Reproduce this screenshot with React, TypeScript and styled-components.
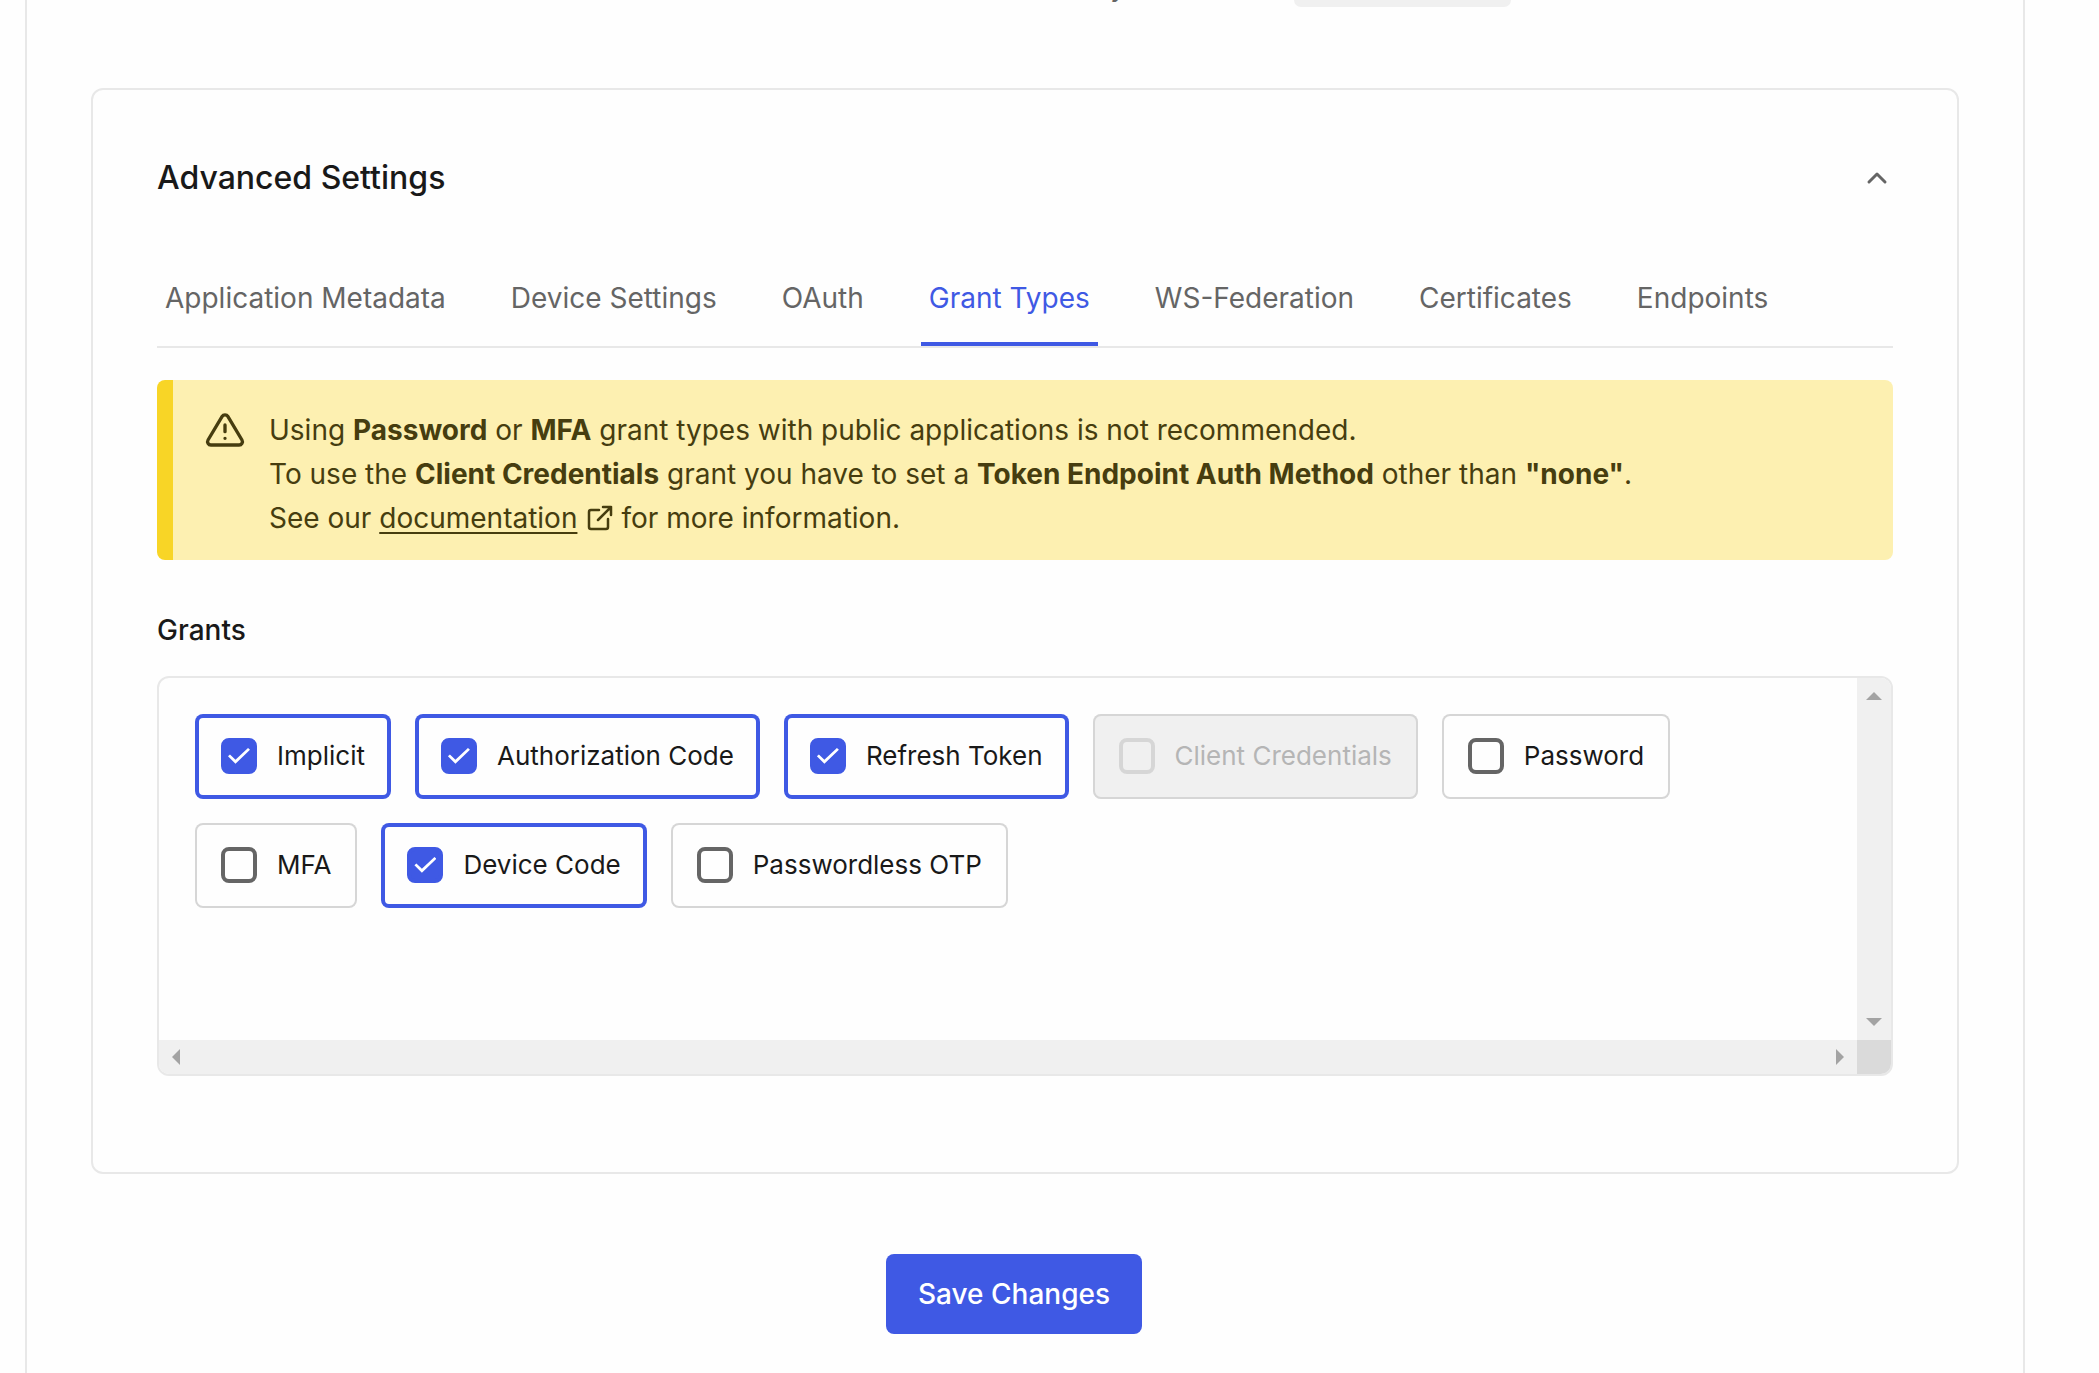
import React, { useState } from "react";
import styled, { createGlobalStyle, css } from "styled-components";

const color = {
  ink: "#191919",
  muted: "#656565",
  line: "#e8e8e8",
  chipLine: "#d6d6d6",
  primary: "#3f59e4",
  surface: "#f0f0f0",
  disabledText: "#b5b5b5",
  alertBg: "#fdf0b1",
  alertBar: "#f8d526",
  alertText: "#463d0f",
};

const GlobalStyle = createGlobalStyle`
  *, *::before, *::after { box-sizing: border-box; }
  body {
    margin: 0;
    background: #fefefe;
    color: ${color.ink};
    font-family: Inter, "Liberation Sans", sans-serif;
    font-size: 28px;
    line-height: 44px;
  }
  h2, h3, p, fieldset { margin: 0; padding: 0; border: 0; }
  h2, h3 { font-weight: 500; }
  button, input { font: inherit; }
`;

const Page = styled.div`
  min-height: 100vh;
  display: flex;
  padding: 0 74px 0 25px;
`;

const Panel = styled.main`
  flex: 1;
  min-width: 0;
  display: flex;
  flex-direction: column;
  padding: 0 64px 39px;
  border: solid ${color.line};
  border-width: 0 2px;
`;

const HintRow = styled.div`
  height: 88px;
  display: flex;
  justify-content: flex-end;
  align-items: flex-start;
  gap: 168px;
  overflow: hidden;
  padding-right: 448px;
`;

const HintText = styled.span`
  margin-top: -36px;
  color: ${color.muted};
`;

const HintCode = styled.code`
  width: 217px;
  height: 7px;
  border-radius: 0 0 8px 8px;
  background: ${color.surface};
`;

const Card = styled.section`
  border: 2px solid ${color.line};
  border-radius: 12px;
  padding: 64px 64px 96px;
`;

const CardHeader = styled.header`
  display: flex;
  align-items: center;
  justify-content: space-between;
  height: 48px;
`;

const Title = styled.h2`
  font-size: 32px;
  line-height: 48px;
`;

const IconButton = styled.button`
  display: flex;
  padding: 0;
  border: 0;
  background: none;
  color: ${color.muted};
`;

const Tabs = styled.div`
  display: flex;
  gap: 49px;
  margin-top: 72px;
  border-bottom: 2px solid ${color.line};
`;

const Tab = styled.button<{ $active: boolean }>`
  height: 72px;
  padding: 0 8px 20px;
  border: 0;
  border-bottom: 4px solid ${(p) => (p.$active ? color.primary : "transparent")};
  background: none;
  color: ${(p) => (p.$active ? color.primary : color.muted)};
  white-space: nowrap;
`;

const Alert = styled.div`
  display: flex;
  gap: 24px;
  margin-top: 32px;
  padding: 28px 32px 20px;
  border-left: 16px solid ${color.alertBar};
  border-radius: 8px;
  background: ${color.alertBg};
  color: ${color.alertText};

  strong { font-weight: 700; }
`;

const DocLink = styled.a`
  color: inherit;
  text-underline-offset: 4px;
  text-decoration-thickness: 2px;
`;

const WarningIcon = styled.svg`
  flex: none;
  width: 40px;
  height: 40px;
  margin-top: 2px;
`;

const LinkIcon = styled.svg`
  width: 24px;
  height: 24px;
  margin: 0 9px 0 11px;
  vertical-align: -2px;
  overflow: visible;
`;

const SectionLabel = styled.h3`
  margin: 48px 0 24px;
  font-size: 28px;
  line-height: 44px;
`;

const GrantBox = styled.div`
  display: grid;
  grid-template: 1fr 34px / 1fr 34px;
  height: 400px;
  border: 2px solid ${color.line};
  border-radius: 12px;
  overflow: hidden;
`;

const GrantList = styled.fieldset`
  display: flex;
  flex-wrap: wrap;
  align-content: flex-start;
  gap: 24px;
  min-width: 0;
  padding: 36px;
`;

const ScrollTrack = styled.div<{ $vertical?: boolean }>`
  display: flex;
  flex-direction: ${(p) => (p.$vertical ? "column" : "row")};
  align-items: center;
  justify-content: space-between;
  padding: ${(p) => (p.$vertical ? "14px 0" : "0 13px")};
  background: ${color.surface};
`;

const ScrollCorner = styled.div`
  background: #dadada;
`;

const Chip = styled.label<{ $checked: boolean; $disabled?: boolean }>`
  display: flex;
  align-items: center;
  gap: 20px;
  height: 85px;
  padding: 0 26px 1px;
  border-radius: 8px;
  font-size: 26px;
  white-space: nowrap;
  box-shadow: inset 0 0 0 ${(p) => (p.$checked ? `4px ${color.primary}` : `2px ${color.chipLine}`)};
  ${(p) =>
    p.$disabled &&
    css`
      background: ${color.surface};
      color: ${color.disabledText};
    `}
`;

const Check = styled.input`
  appearance: none;
  display: grid;
  place-items: center;
  width: 36px;
  height: 36px;
  margin: 0;
  border: 4px solid ${color.muted};
  border-radius: 8px;
  background: transparent;

  &:checked {
    border-color: ${color.primary};
    background: ${color.primary};
  }
  &:checked::before {
    content: "";
    width: 22px;
    height: 16px;
    background: #fff;
    clip-path: polygon(0 52%, 9% 40%, 34% 73%, 91% 0, 100% 11%, 34% 98%);
  }
  &:disabled {
    border-color: ${color.chipLine};
  }
`;

const Footer = styled.footer`
  display: flex;
  justify-content: center;
  margin-top: 80px;
  padding-right: 22px;
`;

const SaveButton = styled.button`
  height: 80px;
  padding: 0 32px;
  border: 0;
  border-radius: 8px;
  background: ${color.primary};
  color: #fff;
  font-weight: 500;
`;

const tabs = [
  "Application Metadata",
  "Device Settings",
  "OAuth",
  "Grant Types",
  "WS-Federation",
  "Certificates",
  "Endpoints",
];

const initialGrants = [
  { name: "Implicit", checked: true },
  { name: "Authorization Code", checked: true },
  { name: "Refresh Token", checked: true },
  { name: "Client Credentials", checked: false, disabled: true },
  { name: "Password", checked: false },
  { name: "MFA", checked: false },
  { name: "Device Code", checked: true },
  { name: "Passwordless OTP", checked: false },
];

const arrows = {
  up: { w: 16, h: 8, points: "0,8 8,0 16,8" },
  down: { w: 16, h: 8, points: "0,0 16,0 8,8" },
  left: { w: 8, h: 16, points: "8,0 8,16 0,8" },
  right: { w: 8, h: 16, points: "0,0 8,8 0,16" },
};

function Arrow({ to }: { to: keyof typeof arrows }) {
  const a = arrows[to];
  return (
    <svg width={a.w} height={a.h} fill="#a3a3a3" aria-hidden="true">
      <polygon points={a.points} />
    </svg>
  );
}

export default function App() {
  const [active, setActive] = useState("Grant Types");
  const [grants, setGrants] = useState(initialGrants);

  const toggle = (name: string) =>
    setGrants((list) => list.map((g) => (g.name === name ? { ...g, checked: !g.checked } : g)));

  return (
    <>
      <GlobalStyle />
      <Page>
        <Panel>
          <HintRow>
            <HintText>y</HintText>
            <HintCode />
          </HintRow>
          <Card>
            <CardHeader>
              <Title>Advanced Settings</Title>
              <IconButton type="button" aria-label="Collapse advanced settings">
                <svg width="32" height="32" viewBox="0 0 32 32" fill="none" stroke="currentColor" strokeWidth="3" strokeLinecap="round" strokeLinejoin="round">
                  <path d="M8 20l8-8 8 8" />
                </svg>
              </IconButton>
            </CardHeader>

            <Tabs role="tablist">
              {tabs.map((t) => (
                <Tab key={t} type="button" role="tab" aria-selected={t === active} $active={t === active} onClick={() => setActive(t)}>
                  {t}
                </Tab>
              ))}
            </Tabs>

            <Alert role="note">
              <WarningIcon viewBox="0 0 24 24" fill="none" stroke="currentColor" strokeWidth="2" strokeLinecap="round" strokeLinejoin="round" aria-hidden="true">
                <path d="M10.29 3.86 1.82 18a2 2 0 0 0 1.71 3h16.94a2 2 0 0 0 1.71-3L13.71 3.86a2 2 0 0 0-3.42 0zM12 9v4M12 17h.01" />
              </WarningIcon>
              <p>
                Using <strong>Password</strong> or <strong>MFA</strong> grant types with public applications is not recommended.
                <br />
                To use the <strong>Client Credentials</strong> grant you have to set a <strong>Token Endpoint Auth Method</strong> other than <strong>"none"</strong>.
                <br />
                See our <DocLink href="#documentation">documentation</DocLink>
                <LinkIcon viewBox="0 0 24 24" fill="none" stroke="currentColor" strokeWidth="2.5" strokeLinecap="round" strokeLinejoin="round" aria-hidden="true">
                  <path d="M20 13v8a2 2 0 0 1-2 2H3a2 2 0 0 1-2-2V6a2 2 0 0 1 2-2h8M15 1h8v8M10 14 23 1" />
                </LinkIcon>
                for more information.
              </p>
            </Alert>

            <SectionLabel id="grants-label">Grants</SectionLabel>
            <GrantBox>
              <GrantList aria-labelledby="grants-label">
                {grants.map((g) => (
                  <Chip key={g.name} $checked={g.checked} $disabled={g.disabled}>
                    <Check type="checkbox" checked={g.checked} disabled={g.disabled} onChange={() => toggle(g.name)} />
                    {g.name}
                  </Chip>
                ))}
              </GrantList>
              <ScrollTrack $vertical>
                <Arrow to="up" />
                <Arrow to="down" />
              </ScrollTrack>
              <ScrollTrack>
                <Arrow to="left" />
                <Arrow to="right" />
              </ScrollTrack>
              <ScrollCorner />
            </GrantBox>
          </Card>
          <Footer>
            <SaveButton type="button">Save Changes</SaveButton>
          </Footer>
        </Panel>
      </Page>
    </>
  );
}
